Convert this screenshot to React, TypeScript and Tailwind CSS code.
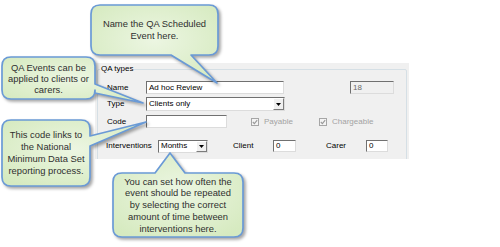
type Side = "top" | "right" | "bottom" | "left";

type Bubble = {
  x: number;
  y: number;
  w: number;
  h: number;
  side: Side;
  a: number;
  b: number;
  px: number;
  py: number;
  lh: number;
  lines: string[];
};

const bubbles: Bubble[] = [
  { x: 91, y: 5, w: 127, h: 50, side: "bottom", a: 171, b: 191, px: 217, py: 83, lh: 12, lines: ["Name the QA Scheduled", "Event here."] },
  { x: 2, y: 57, w: 93, h: 42, side: "right", a: 84, b: 93, px: 143, py: 103, lh: 11, lines: ["QA Events can be", "applied to clients or", "carers."] },
  { x: 2, y: 120, w: 88, h: 66, side: "right", a: 136, b: 146, px: 146, py: 122, lh: 12, lines: ["This code links to", "the National", "Minimum Data Set", "reporting process."] },
  { x: 113, y: 173, w: 130, h: 64, side: "top", a: 155, b: 185, px: 170, py: 153, lh: 11.75, lines: ["You can set how often the", "event should be repeated", "by selecting the correct", "amount of time between", "interventions here."] },
];

function bubblePath(c: Bubble) {
  const r = 9;
  const { x, y, w, h, side, a, b, px, py } = c;
  let d = `M ${x + r} ${y} `;
  if (side === "top") d += `L ${a} ${y} L ${px} ${py} L ${b} ${y} `;
  d += `L ${x + w - r} ${y} Q ${x + w} ${y} ${x + w} ${y + r} `;
  if (side === "right") d += `L ${x + w} ${a} L ${px} ${py} L ${x + w} ${b} `;
  d += `L ${x + w} ${y + h - r} Q ${x + w} ${y + h} ${x + w - r} ${y + h} `;
  if (side === "bottom") d += `L ${b} ${y + h} L ${px} ${py} L ${a} ${y + h} `;
  d += `L ${x + r} ${y + h} Q ${x} ${y + h} ${x} ${y + h - r} `;
  if (side === "left") d += `L ${x} ${b} L ${px} ${py} L ${x} ${a} `;
  d += `L ${x} ${y + r} Q ${x} ${y} ${x + r} ${y} Z`;
  return d;
}

function Callout({ c, id }: { c: Bubble; id: string }) {
  return (
    <div className="pointer-events-none absolute inset-0">
      <svg width="500" height="247" className="absolute left-0 top-0 drop-shadow-[2px_2px_1.5px_rgba(0,0,0,0.35)]">
        <defs>
          <radialGradient id={id} cx="50%" cy="45%" r="65%">
            <stop offset="0%" stopColor="#ecf6e2" />
            <stop offset="100%" stopColor="#d6eac0" />
          </radialGradient>
        </defs>
        <path d={bubblePath(c)} fill={`url(#${id})`} stroke="#6a9ad6" strokeWidth="1.7" strokeLinejoin="round" />
      </svg>
      <div
        className="absolute flex flex-col items-center justify-center text-center font-['Liberation_Sans',Arial,sans-serif] text-[9.4px] whitespace-nowrap text-[#2f2f2f]"
        style={{ left: c.x, top: c.y, width: c.w, height: c.h, lineHeight: `${c.lh}px` }}
      >
        {c.lines.map((l) => (
          <span key={l}>{l}</span>
        ))}
      </div>
    </div>
  );
}

const sunken =
  "border border-t-[#707070] border-l-[#707070] border-r-[#dcdcdc] border-b-[#dcdcdc]";

function DropButton() {
  return (
    <span className="ml-auto flex h-full w-[11px] items-center justify-center border border-t-white border-l-white border-r-[#7c7c7c] border-b-[#7c7c7c] bg-[#f0f0f0]">
      <svg width="5" height="3" viewBox="0 0 5 3">
        <path d="M0 0 H5 L2.5 3 Z" fill="#000" />
      </svg>
    </span>
  );
}

function Check({ label }: { label: string }) {
  return (
    <span className="flex items-center">
      <span className="flex h-[8px] w-[8px] items-center justify-center border border-[#a6a6a6] bg-[#f4f4f4]">
        <svg width="6" height="6" viewBox="0 0 6 6">
          <path d="M0.8 3 L2.4 4.6 L5.2 1.2" fill="none" stroke="#9a9a9a" strokeWidth="1.1" />
        </svg>
      </span>
      <span className="ml-[5px] text-[#a3a3a3]">{label}</span>
    </span>
  );
}

export default function App() {
  return (
    <div className="relative h-[247px] w-[500px] overflow-hidden bg-white font-['Liberation_Sans',Arial,sans-serif] text-[8px] text-black">
      <div className="pl-[95px] pt-[63px]">
        <div className="h-[96px] w-[314px] overflow-hidden bg-[#f0f0f0] pl-[2px] pt-[6px]">
          <div className="relative h-[120px] w-[310px] rounded-[2px] border border-[#d5dfe5] pt-[11px]">
            <span className="absolute -top-[6px] left-[2px] bg-[#f0f0f0] px-[1px] leading-[10px]">QA types</span>

            <div className="flex h-[13px] items-center pl-[9px]">
              <span className="w-[39px]">Name</span>
              <span className={`flex h-[13px] w-[138px] items-center bg-white pl-[2px] ${sunken}`}>Ad hoc Review</span>
              <span className={`ml-[66px] flex h-[13px] w-[44px] items-center bg-[#f0f0f0] pl-[2px] text-[#6a6a6a] ${sunken}`}>18</span>
            </div>

            <div className="mt-[3px] flex h-[14px] items-center pl-[9px]">
              <span className="w-[39px]">Type</span>
              <span className={`flex h-[14px] w-[139px] items-center bg-white pl-[2px] ${sunken}`}>
                Clients only
                <DropButton />
              </span>
            </div>

            <div className="mt-[4px] flex h-[13px] items-center pl-[9px]">
              <span className="w-[39px]">Code</span>
              <span className={`h-[13px] w-[81px] bg-white ${sunken}`} />
              <span className="ml-[24px] w-[68px]">
                <Check label="Payable" />
              </span>
              <Check label="Chargeable" />
            </div>

            <div className="mt-[11px] flex h-[14px] items-center pl-[8px]">
              <span className="w-[52px]">Interventions</span>
              <span className={`flex h-[13px] w-[50px] items-center bg-white pl-[2px] ${sunken}`}>
                Months
                <DropButton />
              </span>
              <span className="ml-[25px] w-[40px]">Client</span>
              <span className={`flex h-[12px] w-[23px] items-center bg-white pl-[2px] ${sunken}`}>0</span>
              <span className="ml-[30px] w-[40px]">Carer</span>
              <span className={`flex h-[12px] w-[22px] items-center bg-white pl-[2px] ${sunken}`}>0</span>
            </div>
          </div>
        </div>
      </div>

      {bubbles.map((c, i) => (
        <Callout key={i} c={c} id={`bg${i}`} />
      ))}
    </div>
  );
}
